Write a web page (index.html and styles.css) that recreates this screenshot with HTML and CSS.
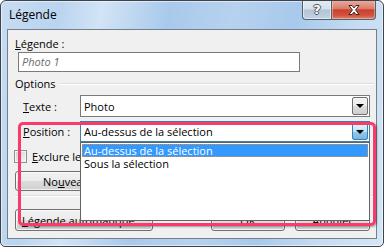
FILE: index.html
```html
<!DOCTYPE html>
<html lang="fr">
<head>
<meta charset="utf-8">
<title>Légende</title>
<link rel="stylesheet" href="styles.css">
</head>
<body>
<div class="window">
  <div class="titlebar">
    <span class="title">Légende</span>
    <div class="caption">
      <div class="cap cap-help"><span class="glyph">?</span></div>
      <div class="cap cap-close">
        <svg width="16" height="12" viewBox="0 0 16 12"><path d="M3 1.5h3l2 2.4 2-2.4h3l-3.4 4.5 3.4 4.5h-3l-2-2.4-2 2.4h-3l3.4-4.5z" fill="#fff" stroke="#3b2320" stroke-width="1" stroke-linejoin="round"/></svg>
      </div>
    </div>
  </div>
  <div class="client">
    <div class="lbl-top"><u>L</u>égende :</div>
    <div class="textbox">Photo 1</div>
    <div class="group-head"><span>Options</span><div class="group-line"></div></div>
    <div class="row row-texte">
      <span class="row-lbl"><u>T</u>exte :</span>
      <div class="combo"><span class="combo-text">Photo</span><span class="drop"><span class="tri"></span></span></div>
    </div>
    <div class="row row-pos">
      <span class="row-lbl"><u>P</u>osition :</span>
      <div class="combo combo-focus"><span class="combo-text">Au-dessus de la sélection</span><span class="drop drop-hot"><span class="tri"></span></span></div>
    </div>
    <div class="check-row"><span class="checkbox"></span><span class="check-text"><u>E</u>xclure le numéro de la légende</span></div>
    <div class="btn-row">
      <div class="button btn-new"><span class="clip-new">No<u>u</u>veau...</span></div>
      <div class="button btn-mid"></div>
      <div class="button btn-mid"></div>
    </div>
    <div class="sep"></div>
    <div class="bottom-row">
      <div class="button btn-auto"><u>L</u>égende automatique...</div>
      <div class="button btn-ok">OK</div>
      <div class="button btn-cancel">Annuler</div>
    </div>
    <div class="list">
      <div class="item item-sel">Au-dessus de la sélection</div>
      <div class="item">Sous la sélection</div>
    </div>
    <div class="highlight"></div>
  </div>
</div>
</body>
</html>
```
FILE: styles.css
```css
* { box-sizing: border-box; margin: 0; padding: 0; }
html, body { width: 384px; height: 247px; overflow: hidden; background: #fff; }
body { font-family: "Open Sans", "Noto Sans", sans-serif; font-size: 11px; color: #000; }
u { text-decoration: underline; text-underline-offset: 1px; }

.window {
  width: 384px; height: 247px;
  border: 1px solid #3d434a;
  border-radius: 6px 6px 5px 5px;
  background: linear-gradient(100deg, #c6dcf2 0%, #bad4ef 14%, #d2e4f6 24%, #a9c9ec 40%, #b7d2ef 55%, #a8c9ec 70%, #c6dcf3 85%, #d4e6f7 100%);
  box-shadow: inset 0 0 0 1px rgba(255,255,255,0.55);
  display: flex; flex-direction: column;
  overflow: hidden;
}
.titlebar { height: 28px; flex: none; display: flex; align-items: flex-start; }
.title { padding: 6px 0 0 8px; font-size: 12px; line-height: 16px; color: #000; }
.caption { margin-left: auto; margin-right: 7px; margin-top: -1px; display: flex; }
.cap { height: 20px; display: flex; align-items: center; justify-content: center; border: 1px solid #50606f; border-top: none; }
.cap-help {
  width: 29px; border-radius: 0 0 0 4px; border-right: none;
  background: linear-gradient(#e4ecf3 0%, #d5e0ea 48%, #b3c3d3 52%, #c3d3e2 100%);
  box-shadow: inset 0 0 0 1px rgba(255,255,255,0.5);
}
.glyph { font-family: "DejaVu Sans", sans-serif; font-weight: bold; font-size: 13px; line-height: 14px; color: #fff;
  text-shadow: -1px 0 #4a5560, 1px 0 #4a5560, 0 -1px #4a5560, 0 1px #4a5560; }
.cap-close {
  width: 45px; border-radius: 0 0 4px 0;
  background: linear-gradient(#eab0a4 0%, #dd7c69 45%, #c8412d 52%, #d2513c 80%, #e0836c 100%);
  box-shadow: inset 0 0 0 1px rgba(255,220,210,0.45);
}

.client {
  margin: 0 6px; height: 210px; flex: none;
  border: 1px solid #757f8a;
  background: #f0f0f0;
  position: relative;
}
.lbl-top { margin: 6px 0 0 7px; line-height: 15px; }
.textbox {
  margin: 1px 0 0 10px; width: 282px; height: 20px;
  border: 1px solid #7a7a7a; background: #fff;
  padding-left: 3px; line-height: 18px;
  font-style: italic; color: #6d6d6d;
}
.group-head { margin-top: 4px; display: flex; align-items: center; padding-left: 7px; line-height: 15px; }
.group-line { flex: 1; height: 2px; margin: 0 2px 0 4px; border-top: 1px solid #d5dfe5; border-bottom: 1px solid #fff; }

.row { display: flex; align-items: center; padding-left: 15px; height: 21px; }
.row-texte { margin-top: 4px; height: 22px; }
.row-pos { margin-top: 4px; }
.row-lbl { width: 57px; line-height: 15px; }
.combo {
  width: 290px; height: 100%;
  border: 1px solid #7a7a7a; background: #fff;
  display: flex; align-items: center;
}
.combo-text { flex: 1; padding-left: 3px; line-height: 15px; }
.combo-focus { border-color: #3c7fb1; }
.drop {
  width: 16px; height: calc(100% - 2px); margin-right: 1px;
  border: 1px solid #707070; border-radius: 2px;
  background: linear-gradient(#f4f4f4 0%, #ebebeb 50%, #dcdcdc 50%, #cfcfcf 100%);
  display: flex; align-items: center; justify-content: center;
}
.drop-hot {
  border-color: #3c7fb1;
  background: linear-gradient(#e6f3fb 0%, #bee2f7 50%, #93c9ec 50%, #79b5e0 100%);
}
.tri { width: 0; height: 0; border-left: 4px solid transparent; border-right: 4px solid transparent; border-top: 4px solid #000; }

.check-row { margin-top: 8px; display: flex; align-items: center; padding-left: 6px; height: 13px; line-height: 15px; white-space: nowrap; }
.checkbox {
  width: 13px; height: 13px; margin-right: 5px; flex: none;
  border: 1px solid #8e8f8f;
  background: linear-gradient(135deg, #cfcfcf, #f6f6f6);
  box-shadow: inset 0 0 0 1px #f4f4f4;
}
.check-text { width: 48px; overflow: hidden; }

.button {
  height: 20px; border: 1px solid #707070; border-radius: 3px;
  background: linear-gradient(#f2f2f2 0%, #ebebeb 50%, #dddddd 50%, #cfcfcf 100%);
  box-shadow: inset 0 0 0 1px rgba(255,255,255,0.7);
  display: flex; align-items: center; justify-content: center;
  line-height: 15px; white-space: nowrap;
}
.btn-row { margin-top: 8px; display: flex; gap: 6px; padding-left: 7px; }
.btn-new { width: 114px; justify-content: flex-start; padding-left: 27px; }
.clip-new { width: 38px; overflow: hidden; }
.btn-mid { width: 110px; }
.sep { margin: 4px 2px 0 7px; height: 2px; border-top: 1px solid #d5dfe5; border-bottom: 1px solid #fff; }
.bottom-row { margin-top: 12px; display: flex; padding-left: 7px; height: 22px; }
.bottom-row .button { height: 22px; }
.btn-auto { width: 138px; justify-content: flex-start; padding-left: 6px; }
.btn-ok { width: 74px; margin-left: 58px; }
.btn-cancel { width: 75px; margin-left: 10px; }

.list {
  position: absolute; left: 72px; top: 112px; width: 290px; height: 79px;
  background: #fff; border: 1px solid #646464; padding: 1px 1px 0 1px;
}
.item { height: 13px; line-height: 13px; padding-left: 2px; white-space: nowrap; }
.item-sel { background: #3399ff; color: #fff; outline: 1px dotted #e08a3a; outline-offset: -1px; }
.highlight {
  position: absolute; left: 10px; top: 92px; width: 358px; height: 104px;
  border: 3px solid #fb3a6c; border-radius: 5px;
  box-shadow: 1px 1px 2px rgba(0,0,0,0.35);
}
```
